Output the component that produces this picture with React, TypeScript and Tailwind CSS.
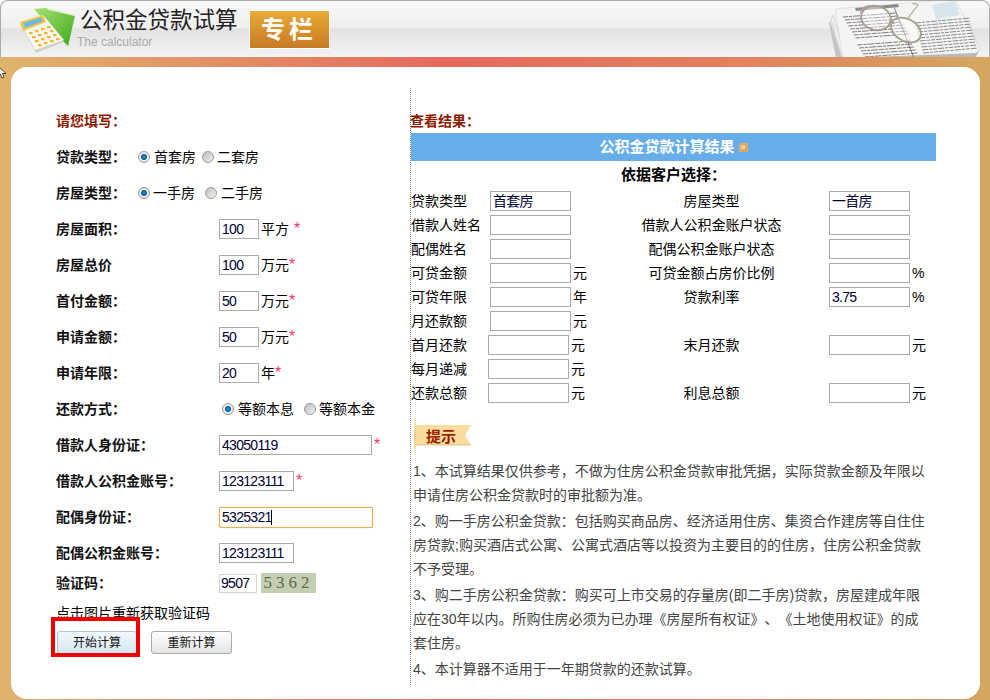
import React from 'react';

const tipLines = [
  ['1、本试算结果仅供参考，不做为住房公积金贷款审批凭据，实际贷款金额及年限以', '申请住房公积金贷款时的审批额为准。'],
  ['2、购一手房公积金贷款：包括购买商品房、经济适用住房、集资合作建房等自住住', '房贷款;购买酒店式公寓、公寓式酒店等以投资为主要目的的住房，住房公积金贷款', '不予受理。'],
  ['3、购二手房公积金贷款：购买可上市交易的存量房(即二手房)贷款，房屋建成年限', '应在30年以内。所购住房必须为已办理《房屋所有权证》、《土地使用权证》的成', '套住房。'],
  ['4、本计算器不适用于一年期贷款的还款试算。'],
];

interface ResultRow {
  label: string;
  value?: string;
  unit?: string;
  label2?: string;
  value2?: string;
  unit2?: string;
  narrow?: boolean;
}

const resultRows: ResultRow[] = [
  { label: '贷款类型', value: '首套房', label2: '房屋类型', value2: '一首房' },
  { label: '借款人姓名', label2: '借款人公积金账户状态', value2: '' },
  { label: '配偶姓名', label2: '配偶公积金账户状态', value2: '' },
  { label: '可贷金额', unit: '元', label2: '可贷金额占房价比例', value2: '', unit2: '%' },
  { label: '可贷年限', unit: '年', label2: '贷款利率', value2: '3.75', unit2: '%' },
  { label: '月还款额', unit: '元' },
  { label: '首月还款', unit: '元', label2: '末月还款', value2: '', unit2: '元', narrow: true },
  { label: '每月递减', unit: '元', narrow: true },
  { label: '还款总额', unit: '元', label2: '利息总额', value2: '', unit2: '元', narrow: true },
];

const Radio = ({ checked, className }: { checked?: boolean; className?: string }) => (
  <span
    className={`inline-block size-3 shrink-0 rounded-full border border-[#9a9a9a] ${
      checked
        ? 'bg-[radial-gradient(circle,#2a9ad8_0%,#0b5c96_38%,#f2f2f2_48%,#cfcfcf_100%)]'
        : 'bg-[linear-gradient(135deg,#bdbdbd,#f2f2f2)]'
    } ${className ?? ''}`}
  />
);

const Field = ({ value, className }: { value?: string; className?: string }) => (
  <input
    readOnly
    value={value ?? ''}
    className={`h-5 border border-[#aaaaaa] bg-white px-[2px] text-[14px] tracking-[-0.7px] text-[#000033] outline-none ${className ?? ''}`}
  />
);

const Star = ({ className }: { className?: string }) => (
  <span className={`text-[16px] leading-none text-[#ff3366] ${className ?? ''}`}>*</span>
);

const FormRow = ({ label, children }: { label: string; children?: React.ReactNode }) => (
  <div className="flex h-9 items-center">
    <div className="w-[163px] shrink-0 font-bold text-[#111111]">{label}</div>
    {children}
  </div>
);

const CalculatorLogo = () => (
  <svg viewBox="18 7 60 48" className="h-[48px] w-[60px] shrink-0">
    <defs>
      <linearGradient id="folder" x1="0" y1="0" x2="1" y2="1">
        <stop offset="0" stopColor="#a6e070" />
        <stop offset="1" stopColor="#3fa81f" />
      </linearGradient>
    </defs>
    <polygon points="34,9 46,8 75,16 68,46 52,30" fill="url(#folder)" />
    <polygon points="46,8 72,14 75,16 48,10" fill="#d9f2c0" />
    <polygon points="20,24 44,16 64,42 36,53" fill="#d2d2ca" />
    <polygon points="20,22 43,15 64,40 35,50" fill="#f6f6ec" />
    <polygon points="20,22 43,15 46,22 23,31" fill="#f3c63e" />
    <polygon points="23,23 41,17.500 43,21 25,28" fill="#6bb8e8" />
    {[0, 1, 2, 3].map((r) =>
      [0, 1, 2, 3].map((c) => (
        <rect
          key={`${r}-${c}`}
          x={29 + c * 6 + r * 3}
          y={32 - c * 2 + r * 4}
          width="3.500"
          height="2.200"
          fill="#f2b431"
        />
      )),
    )}
  </svg>
);

const Newspaper = () => (
  <svg viewBox="825 0 160 57" className="h-[57px] w-[160px] shrink-0">
    <polygon points="830,20 842,57 836,57 829,22" fill="#c4c4c4" />
    <polygon points="833,14 846,57 842,57 831,18" fill="#f0f0f0" stroke="#bdbdbd" strokeWidth="0.500" />
    <polygon points="835,8 955,-2 980,48 975,57 843,57" fill="#f4f4f2" stroke="#cfcfcf" strokeWidth="0.500" />
    <polygon points="843,57 975,57 980,48 976,52" fill="#b9b9b9" />
    {[16, 19, 22, 25, 28, 31, 34, 37, 44, 47, 50, 53, 56].map((y, i) => (
      <line key={y} x1={843 + i * 1.800} y1={y} x2={896 + i * 1.800} y2={y - 4} stroke="#7d7d7d" strokeWidth="1" strokeDasharray="5 1 3 1 7 1" />
    ))}
    {[20, 23, 26, 29, 32, 35, 38, 41, 44, 47, 50].map((y, i) => (
      <line key={y} x1={915 + i * 0.800} y1={y + 2} x2={970 + i * 0.800} y2={y - 3} stroke="#8a8a8a" strokeWidth="1" strokeDasharray="6 1 3 1 4 1" />
    ))}
    <line x1="894" y1="6" x2="914" y2="57" stroke="#666666" strokeWidth="0.800" />
    <polygon points="855,7 898,3 899,6 856,10" fill="#8b8b8b" />
    <polygon points="932,4 955,0 960,14 936,18" fill="#d6e6ee" />
    <ellipse cx="876" cy="17" rx="15" ry="12" fill="#ffffff" fillOpacity="0.400" stroke="#a59d8e" strokeWidth="1.800" transform="rotate(15 876 17)" />
    <ellipse cx="906" cy="29" rx="16" ry="11" fill="#ffffff" fillOpacity="0.400" stroke="#a59d8e" strokeWidth="1.800" transform="rotate(30 906 29)" />
    <path d="M889 20 Q893 20 894 23" fill="none" stroke="#a59d8e" strokeWidth="1.500" />
    <path d="M860 12 Q864 3 872 5 M908 17 L918 4 Q916 2 912 3" fill="none" stroke="#b0a898" strokeWidth="1.200" />
  </svg>
);

export default function App() {
  return (
    <div className="relative h-[700px] w-[990px] overflow-hidden bg-white font-['Liberation_Sans','Noto_Sans_CJK_SC',sans-serif] text-[14px] text-black [text-spacing-trim:space-all]">
      {/* Header */}
      <div className="flex h-[57px] items-start overflow-hidden rounded-t-lg border border-b-0 border-[#aaaaaa] bg-[linear-gradient(#f8f8f8_0%,#efefef_48%,#e2e2e2_50%,#f3f3f3_100%)]">
        <div className="ml-[17px] mt-[6px]">
          <CalculatorLogo />
        </div>
        <div className="ml-px flex flex-col">
          <div className="mt-[5px] ml-px h-[30px] text-[22.5px] leading-[30px] text-[#222222]">公积金贷款试算</div>
          <div className="-ml-[2px] mt-[-1px] text-[12px] leading-[14px] text-[#aaaaaa]">The calculator</div>
        </div>
        <div className="ml-[11px] mt-[9px] flex h-[39px] w-[81px] items-center justify-center border border-white bg-[linear-gradient(#e9ab38,#c77a22)] text-[24px] font-bold tracking-[4px] text-white">
          专栏
        </div>
        <div className="ml-auto mr-[4px]">
          <Newspaper />
        </div>
      </div>

      {/* Gradient band around the card */}
      <div className="h-[643px] bg-[linear-gradient(90deg,#dfb46e_0%,#e5695f_45%,#e2815f_75%,#d4a860_100%)] pb-px pl-[11px] pr-[10px] pt-[10px]">
        <div className="flex h-[632px] rounded-2xl bg-white">
          {/* Form */}
          <div className="w-[399px] shrink-0 pl-[45px] pt-9">
            <div className="flex h-9 items-center font-bold text-[#8b1a00]">请您填写：</div>
            <div className="flex h-9 items-center">
              <div className="w-[82px] shrink-0 font-bold text-[#111111]">贷款类型：</div>
              <Radio checked />
              <span className="ml-1">首套房</span>
              <Radio className="ml-[6px]" />
              <span className="ml-[3px]">二套房</span>
            </div>
            <div className="flex h-9 items-center">
              <div className="w-[82px] shrink-0 font-bold text-[#111111]">房屋类型：</div>
              <Radio checked />
              <span className="ml-[3px]">一手房</span>
              <Radio className="ml-[10px]" />
              <span className="ml-1">二手房</span>
            </div>
            <FormRow label="房屋面积：">
              <Field value="100" className="w-10" />
              <span className="ml-[2px]">平方</span>
              <Star className="ml-[5px]" />
            </FormRow>
            <FormRow label="房屋总价">
              <Field value="100" className="w-10" />
              <span className="ml-[2px]">万元</span>
              <Star />
            </FormRow>
            <FormRow label="首付金额：">
              <Field value="50" className="w-10" />
              <span className="ml-[2px]">万元</span>
              <Star />
            </FormRow>
            <FormRow label="申请金额：">
              <Field value="50" className="w-10" />
              <span className="ml-[2px]">万元</span>
              <Star />
            </FormRow>
            <FormRow label="申请年限：">
              <Field value="20" className="w-10" />
              <span className="ml-[2px]">年</span>
              <Star />
            </FormRow>
            <FormRow label="还款方式：">
              <Radio checked className="ml-[3px]" />
              <span className="ml-[4px]">等额本息</span>
              <Radio className="ml-[10px]" />
              <span className="ml-[3px]">等额本金</span>
            </FormRow>
            <FormRow label="借款人身份证：">
              <Field value="43050119" className="w-[153px]" />
              <Star className="ml-[2px]" />
            </FormRow>
            <FormRow label="借款人公积金账号：">
              <Field value="123123111" className="w-[75px]" />
              <Star className="ml-[2px]" />
            </FormRow>
            <FormRow label="配偶身份证：">
              <div className="relative">
                <input
                  readOnly
                  value="5325321"
                  className="block h-[21px] w-[154px] rounded-[2px] border border-[#e6b04e] bg-white px-[2px] text-[14px] tracking-[-0.7px] text-[#000033] shadow-[0_0_1px_#e6b04e] outline-none"
                />
                <span className="absolute left-[52px] top-[3px] h-[15px] w-px bg-black" />
              </div>
            </FormRow>
            <FormRow label="配偶公积金账号：">
              <Field value="123123111" className="w-[75px]" />
            </FormRow>
            <div className="flex h-6 items-center">
              <div className="w-[163px] shrink-0 font-bold text-[#111111]">验证码：</div>
              <input
                readOnly
                value="9507"
                className="h-[19px] w-[38px] border border-[#d4d4d4] bg-white px-px text-[14px] tracking-[-0.7px] text-[#000033] outline-none"
              />
              <div className="ml-1 flex h-[20px] w-[55px] items-center justify-center bg-[#c3cfb0] font-['Liberation_Serif',serif] text-[17px] tracking-[4px] text-[#5c6a52]">
                5362
              </div>
            </div>
            <div className="flex h-9 items-center">点击图片重新获取验证码</div>
            <div className="flex gap-[14px] pl-px">
              <button className="h-[23px] w-[80px] rounded-[3px] border border-[#a9c6db] bg-[linear-gradient(#f2f8fc,#d5e7f4)] text-[12px] text-[#111111]">
                开始计算
              </button>
              <button className="h-[23px] w-[81px] rounded-[3px] border border-[#aaaaaa] bg-[linear-gradient(#ffffff,#e4e4e4)] text-[12px] text-[#111111]">
                重新计算
              </button>
            </div>
          </div>

          {/* Results */}
          <div className="mt-[21px] h-[597px] w-[527px] shrink-0 border-l border-dotted border-[#888888] pt-[21px]">
            <div className="-ml-px flex h-6 items-center font-bold text-[#8b1a00]">查看结果：</div>
            <div className="flex h-7 w-[525px] items-center justify-center gap-[4px] bg-[#66aeea] text-[15px] font-bold text-white">
              <span>公积金贷款计算结果</span>
              <span className="flex size-[9px] items-center justify-center bg-[#d8ab66] text-[9px] font-normal leading-none">»</span>
            </div>
            <div className="flex h-7 w-[525px] items-center justify-center text-[15px] font-bold">依据客户选择：</div>
            {resultRows.map((row) => (
              <div key={row.label} className="flex h-6 items-center whitespace-nowrap">
                <div className="flex w-[163px] shrink-0 items-center">
                  <div className={`shrink-0 ${row.narrow ? 'w-[77px]' : 'w-[79px]'}`}>{row.label}</div>
                  <Field value={row.value} className="w-[81px] shrink-0" />
                  {row.unit && <span className="ml-[2px] shrink-0">{row.unit}</span>}
                </div>
                <div className="w-[255px] shrink-0 pl-5 text-center">{row.label2}</div>
                {row.value2 !== undefined && <Field value={row.value2} className="w-[81px] shrink-0" />}
                {row.unit2 && <span className="ml-[2px]">{row.unit2}</span>}
              </div>
            ))}

            {/* Tip ribbon */}
            <div className="relative ml-[3px] mt-3 flex h-[38px] w-[58px] items-center">
              <svg viewBox="0 0 58 38" className="absolute inset-0 h-[38px] w-[58px]">
                <defs>
                  <linearGradient id="pole" x1="0" y1="0" x2="0" y2="1">
                    <stop offset="0" stopColor="#fff4dc" />
                    <stop offset="0.500" stopColor="#f5c77a" />
                    <stop offset="1" stopColor="#fff4dc" />
                  </linearGradient>
                </defs>
                <rect x="0" y="0" width="2" height="38" fill="url(#pole)" />
                <polygon points="2,8 57,8 51,18 57,28 2,28" fill="#fbdc9f" />
                <rect x="2" y="27" width="55" height="1.500" fill="#eccb8e" />
              </svg>
              <span className="relative ml-[12px] text-[15px] font-bold leading-none text-[#9c1c00]">提示</span>
            </div>

            <div className="mt-1 whitespace-nowrap pl-[2px] text-[#444444]">
              <div className="leading-6">
                {tipLines[0].map((l) => (
                  <div key={l}>{l}</div>
                ))}
              </div>
              <div className="mt-[2px] leading-6">
                {tipLines[1].map((l) => (
                  <div key={l}>{l}</div>
                ))}
              </div>
              <div className="mt-[2px] leading-6">
                {tipLines[2].map((l) => (
                  <div key={l}>{l}</div>
                ))}
              </div>
              <div className="mt-[2px] leading-6">
                {tipLines[3].map((l) => (
                  <div key={l}>{l}</div>
                ))}
              </div>
            </div>
          </div>
        </div>
      </div>

      {/* Red highlight drawn over the start button */}
      <div className="pointer-events-none absolute left-[51px] top-[617px] h-10 w-[89px] border-4 border-[#f00000]" />

      {/* Mouse pointer */}
      <svg viewBox="0 0 10 14" className="pointer-events-none absolute left-[-3px] top-[65px] h-[14px] w-[10px]">
        <path d="M1 1 L1 11 L3.500 9 L5 13 L7 12 L5.500 8.500 L9 8.500 Z" fill="#ffffff" stroke="#222222" strokeWidth="0.800" />
      </svg>
    </div>
  );
}
